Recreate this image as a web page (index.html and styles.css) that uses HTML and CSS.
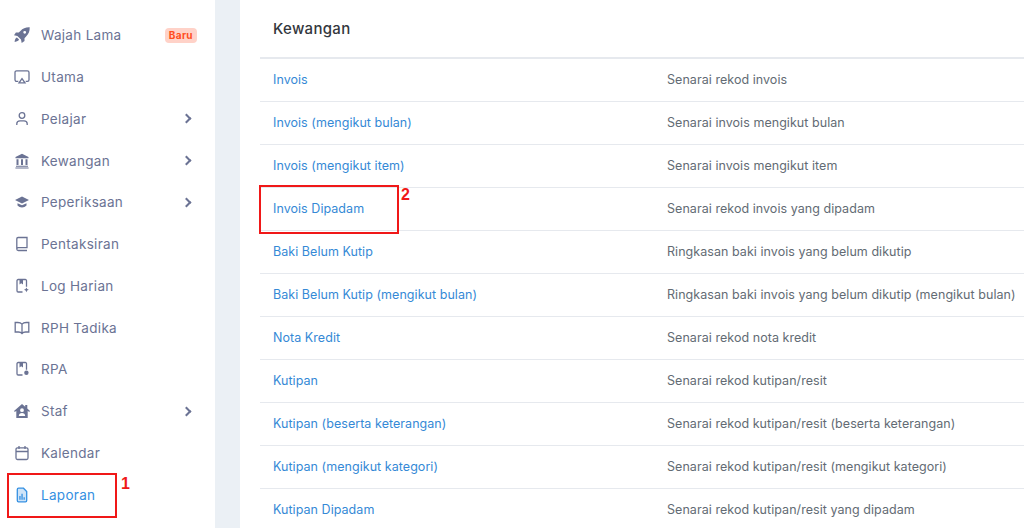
FILE: index.html
```html
<!DOCTYPE html>
<html lang="en">
<head>
    <meta charset="UTF-8">
    <title>Laporan Kewangan</title>
    <link rel="stylesheet" href="styles.css">
</head>
<body>
    <div class="layout">
        <nav class="sidebar">
            <a class="nav-item">
                <svg class="nav-icon" viewBox="0 0 16 16"><path fill="currentColor" fill-rule="evenodd" d="M15.7.3C12 .1 8.800 1.400 6.400 3.900L4.800 5.500H1.900L0 8.300l3.400.7 3.600 3.600.7 3.400 2.800-1.900v-2.900l1.600-1.600C14.600 7.200 15.900 4 15.700.3zM10.700 3.900a1.400 1.400 0 1 1 0 2.800 1.400 1.400 0 0 1 0-2.800z"/><path fill="currentColor" d="M2.900 10.500c-1.300.5-2.100 1.800-2.300 4.400 2.600-.2 3.900-1 4.400-2.300z"/></svg>
                <span class="nav-label">Wajah Lama</span>
                <span class="badge">Baru</span>
            </a>
            <a class="nav-item">
                <svg class="nav-icon" viewBox="0 0 16 16"><path class="line" d="M4.300 12.400H2.600A1.600 1.600 0 0 1 1 10.800V3.400a1.600 1.600 0 0 1 1.600-1.600h10.800A1.600 1.600 0 0 1 15 3.400v7.400a1.600 1.600 0 0 1-1.600 1.600h-1.700"/><path class="line" d="M8 9.600l3 4.200H5z"/></svg>
                <span class="nav-label">Utama</span>
            </a>
            <a class="nav-item">
                <svg class="nav-icon" viewBox="0 0 16 16"><circle class="line" cx="8" cy="4.500" r="2.800"/><path class="line" d="M2.800 14v-1.200c0-1.800 1.500-3 3.200-3h4c1.700 0 3.200 1.200 3.200 3V14"/></svg>
                <span class="nav-label">Pelajar</span>
                <span class="chevron"></span>
            </a>
            <a class="nav-item">
                <svg class="nav-icon" viewBox="0 0 16 16"><path fill="currentColor" d="M8 .8l6.500 3.200v1.300h-13V4zM2.500 6.300h2v5.700h-2zM7 6.300h2v5.700H7zM11.500 6.300h2v5.700h-2zM2 12.800h12v1H2zM1.400 14.400h13.200v1H1.400z"/></svg>
                <span class="nav-label">Kewangan</span>
                <span class="chevron"></span>
            </a>
            <a class="nav-item">
                <svg class="nav-icon" viewBox="0 0 16 16"><path fill="currentColor" d="M8 2.500L1 6l7 3.500L15 6zM3.500 9.200v2.300c1.200 1.200 2.800 1.900 4.500 1.900s3.300-.7 4.500-1.900V9.200L8 11.300z"/></svg>
                <span class="nav-label">Peperiksaan</span>
                <span class="chevron"></span>
            </a>
            <a class="nav-item">
                <svg class="nav-icon" viewBox="0 0 16 16"><path class="line" d="M2.800 13V2.800a1.300 1.300 0 0 1 1.300-1.300h8.900v10.200H4.300A1.500 1.500 0 0 0 2.800 13a1.500 1.500 0 0 0 1.500 1.500H13"/></svg>
                <span class="nav-label">Pentaksiran</span>
            </a>
            <a class="nav-item">
                <svg class="nav-icon" viewBox="0 0 16 16"><path class="line" d="M8.500 14H4.200A1.200 1.200 0 0 1 3 12.800V2.700a1.200 1.200 0 0 1 1.200-1.200h7.100a1.200 1.200 0 0 1 1.200 1.200v6"/><path fill="currentColor" d="M5.500 1.500h3.500v5L7.200 5.300 5.500 6.500zM12.400 9.400l.8 1.600 1.600.8-1.600.8-.8 1.600-.8-1.600-1.600-.8 1.600-.8z"/></svg>
                <span class="nav-label">Log Harian</span>
            </a>
            <a class="nav-item">
                <svg class="nav-icon" viewBox="0 0 16 16"><path class="line" d="M8 4.200C7 3 5.600 2.500 3.800 2.500H1.200v9.500h3.300c1.500 0 2.700.4 3.500 1.500.8-1.100 2-1.500 3.500-1.500h3.300V2.500h-2.600C10.400 2.500 9 3 8 4.200zM8 4.200v9.300"/></svg>
                <span class="nav-label">RPH Tadika</span>
            </a>
            <a class="nav-item">
                <svg class="nav-icon" viewBox="0 0 16 16"><path class="line" d="M8.500 14H4.200A1.200 1.200 0 0 1 3 12.800V2.700a1.200 1.200 0 0 1 1.200-1.200h7.100a1.200 1.200 0 0 1 1.200 1.200v6"/><path fill="currentColor" d="M5.500 1.500h3.500v5L7.200 5.300 5.500 6.500z"/><circle fill="currentColor" cx="12.400" cy="11.800" r="2.200"/></svg>
                <span class="nav-label">RPA</span>
            </a>
            <a class="nav-item">
                <svg class="nav-icon" viewBox="0 0 16 16"><path fill="currentColor" fill-rule="evenodd" d="M8 1L0 8l.9 1 1.400-1.200V15h11.400V7.800L15.100 9l.9-1-2.700-2.400V2h-2.100v1.800zM8 5.300a1.900 1.900 0 1 1 0 3.800 1.900 1.900 0 0 1 0-3.800zM4.800 13c0-1.700 1.400-3 3.200-3s3.200 1.300 3.200 3z"/></svg>
                <span class="nav-label">Staf</span>
                <span class="chevron"></span>
            </a>
            <a class="nav-item">
                <svg class="nav-icon" viewBox="0 0 16 16"><rect class="line" x="2" y="2.800" width="12" height="11.700" rx="1.500"/><path class="line" d="M2 6.500h12M5 1v3M11 1v3"/></svg>
                <span class="nav-label">Kalendar</span>
            </a>
            <a class="nav-item active">
                <svg class="nav-icon" viewBox="0 0 16 16"><path class="line doc" d="M9.500 1.200H4.500A1.200 1.200 0 0 0 3.300 2.400v11.200a1.200 1.200 0 0 0 1.200 1.200h7a1.200 1.200 0 0 0 1.200-1.200V4.600z"/><path fill="currentColor" d="M5.300 9h1.300v3.800H5.300zM7.400 6.800h1.300v6H7.400zM9.500 10.200h1.300v2.600H9.500z"/></svg>
                <span class="nav-label">Laporan</span>
            </a>
            <span class="mark mark-laporan"><span class="mark-num">1</span></span>
        </nav>
        <main class="content">
            <h2 class="card-title">Kewangan</h2>
            <table class="report-table">
                <tr><td><a>Invois</a></td><td>Senarai rekod invois</td></tr>
                <tr><td><a>Invois (mengikut bulan)</a></td><td>Senarai invois mengikut bulan</td></tr>
                <tr><td><a>Invois (mengikut item)</a></td><td>Senarai invois mengikut item</td></tr>
                <tr><td class="marked"><a>Invois Dipadam</a><span class="mark mark-dipadam"><span class="mark-num">2</span></span></td><td>Senarai rekod invois yang dipadam</td></tr>
                <tr><td><a>Baki Belum Kutip</a></td><td>Ringkasan baki invois yang belum dikutip</td></tr>
                <tr><td><a>Baki Belum Kutip (mengikut bulan)</a></td><td>Ringkasan baki invois yang belum dikutip (mengikut bulan)</td></tr>
                <tr><td><a>Nota Kredit</a></td><td>Senarai rekod nota kredit</td></tr>
                <tr><td><a>Kutipan</a></td><td>Senarai rekod kutipan/resit</td></tr>
                <tr><td><a>Kutipan (beserta keterangan)</a></td><td>Senarai rekod kutipan/resit (beserta keterangan)</td></tr>
                <tr><td><a>Kutipan (mengikut kategori)</a></td><td>Senarai rekod kutipan/resit (mengikut kategori)</td></tr>
                <tr><td><a>Kutipan Dipadam</a></td><td>Senarai rekod kutipan/resit yang dipadam</td></tr>
            </table>
        </main>
    </div>
</body>
</html>
```

FILE: styles.css
```css
html, body {
    margin: 0;
    height: 100%;
    overflow: hidden;
}
body {
    font-family: Inter, "Noto Sans", sans-serif;
    font-size: 13px;
    background-color: #ebf0f5;
}
.layout {
    display: flex;
    height: 528px;
}
.sidebar {
    position: relative;
    width: 215px;
    flex-shrink: 0;
    padding-top: 14.4px;
    box-sizing: border-box;
    background-color: #ffffff;
}
.nav-item {
    display: flex;
    align-items: center;
    height: 41.75px;
    padding: 0 22px 0 14px;
    color: #6b7394;
    font-size: 13.5px;
    letter-spacing: 0.3px;
}
.nav-item.active {
    color: #3490e2;
}
.nav-icon {
    width: 16px;
    height: 16px;
    margin-right: 11px;
    flex-shrink: 0;
}
.line {
    fill: none;
    stroke: currentColor;
    stroke-width: 1.3;
}
.doc {
    fill: #cfe4f8;
}
.nav-label {
    flex: 1;
}
.badge {
    padding: 2px 4px;
    border-radius: 4px;
    margin-right: -4px;
    background-color: #ffd2c8;
    color: #ff4d1c;
    font-size: 10px;
    font-weight: 700;
    line-height: 11px;
    letter-spacing: 0.4px;
}
.chevron {
    width: 5px;
    height: 5px;
    margin-right: 3px;
    border-top: 2px solid #6b7394;
    border-right: 2px solid #6b7394;
    transform: rotate(45deg);
}
.content {
    flex: 1;
    min-width: 0;
    margin-left: 25px;
    padding: 0 0 0 20px;
    background-color: #ffffff;
    overflow: hidden;
}
.card-title {
    margin: 0;
    height: 57px;
    padding: 20px 0 0 13px;
    box-sizing: border-box;
    color: #33373d;
    font-size: 15px;
    font-weight: 500;
    line-height: 18px;
    letter-spacing: 0.3px;
}
.report-table {
    width: 800px;
    border-collapse: collapse;
    table-layout: fixed;
    color: #636b74;
    font-size: 12.5px;
    letter-spacing: 0.05px;
}
.report-table td {
    height: 40px;
    padding: 0 0 2px 13px;
    border-top: 1px solid #e6e9ee;
    white-space: nowrap;
}
.report-table tr:first-child td {
    border-top-width: 2px;
}
.report-table td:first-child {
    width: 381px;
}
.report-table a {
    color: #3589d6;
}
.marked {
    position: relative;
}
.mark {
    position: absolute;
    box-sizing: border-box;
    border: 2px solid #f01818;
}
.mark-laporan {
    left: 7px;
    top: 473px;
    width: 110px;
    height: 45px;
}
.mark-dipadam {
    left: -1px;
    top: -3px;
    width: 140px;
    height: 49px;
}
.mark-num {
    position: absolute;
    left: 100%;
    top: -1px;
    margin-left: 4px;
    color: #f01818;
    font-family: "Liberation Sans", Arial, sans-serif;
    font-size: 16px;
    line-height: 18px;
    font-weight: 700;
}
.mark-laporan .mark-num {
    top: 0;
    margin-left: 6px;
}
```
